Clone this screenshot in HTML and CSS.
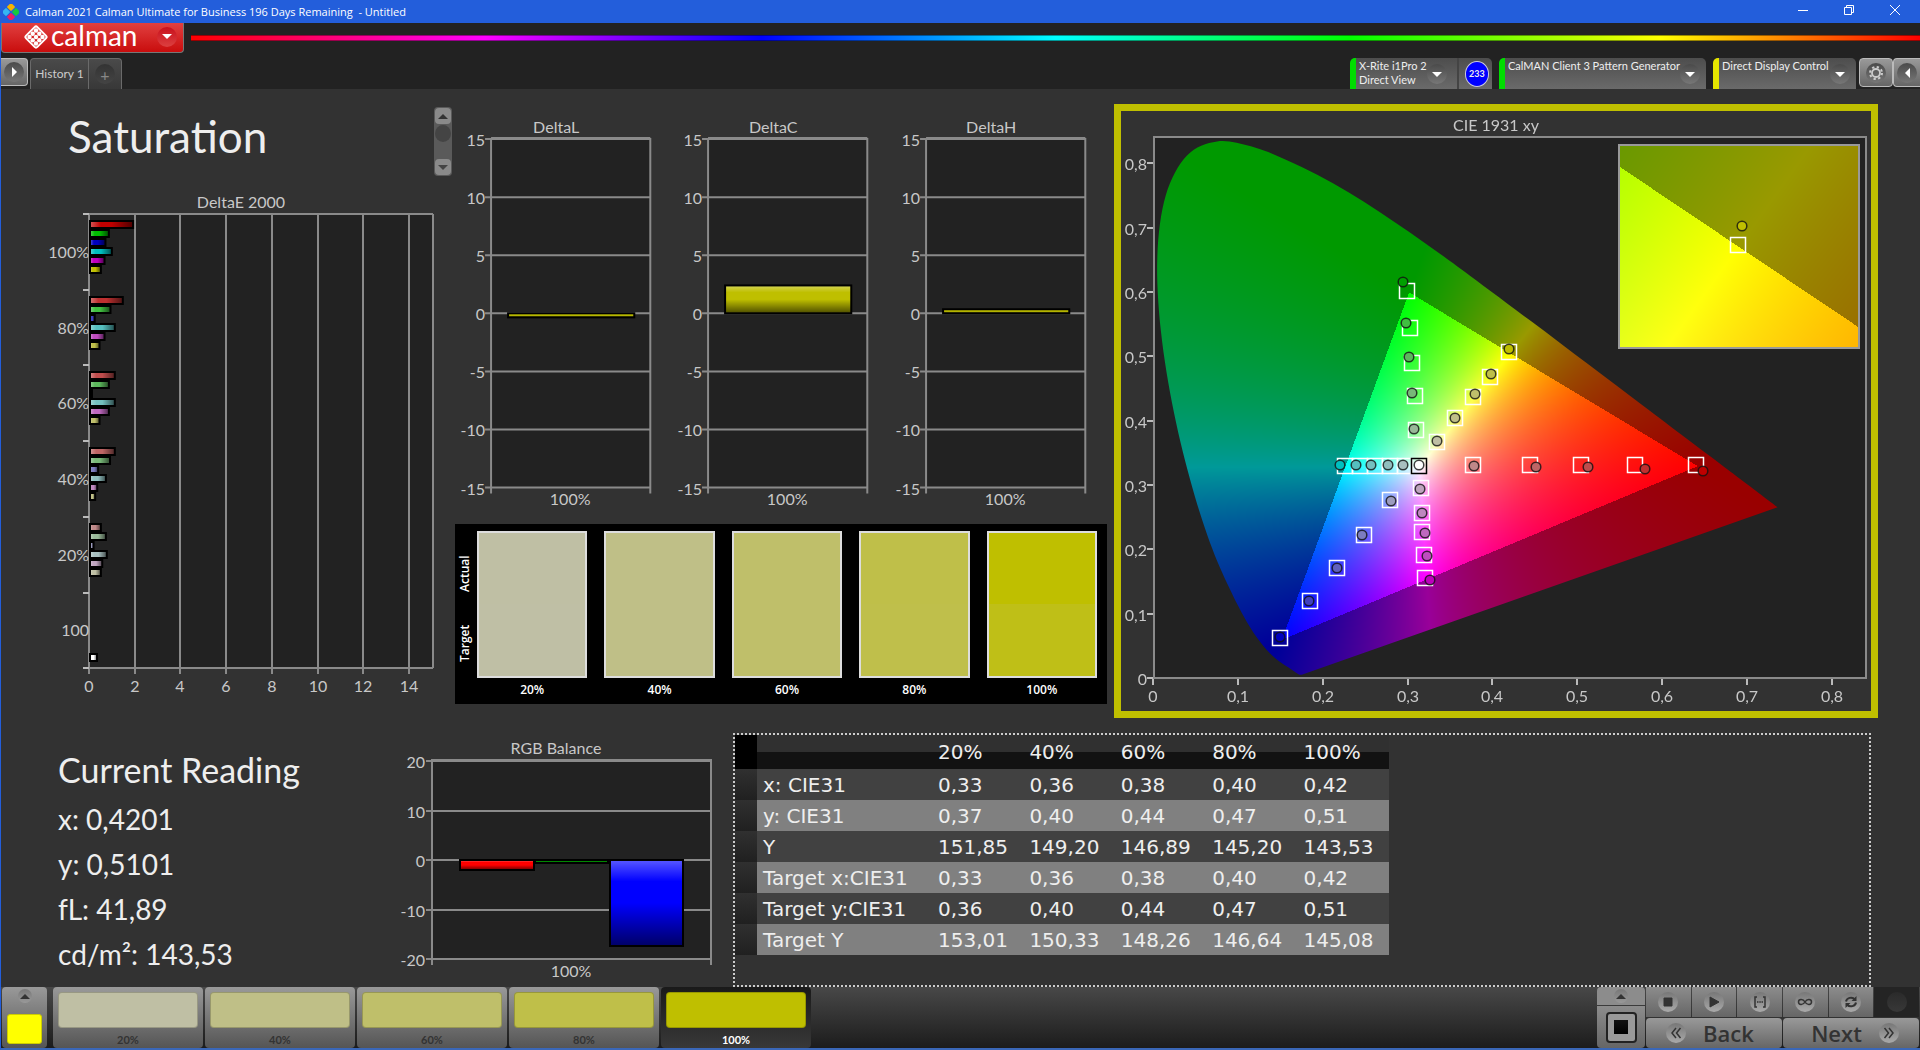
FILE: index.html
```html
<!DOCTYPE html>
<html lang="en">
<head>
  <meta charset="utf-8">
  <title>Calman 2021</title>
  <link rel="stylesheet" href="styles.css">
</head>
<body>
  <!-- Window title -->
  <div class="titlebar">
    <svg class="app-icon" viewBox="0 0 16 16">
      <rect x="5" y="0" width="6" height="6" rx="1" fill="#f5b400" transform="rotate(45 8 3)"/>
      <rect x="0" y="5" width="6" height="6" rx="1" fill="#35b6f2" transform="rotate(45 3 8)"/>
      <rect x="10" y="5" width="6" height="6" rx="1" fill="#17c83c" transform="rotate(45 13 8)"/>
      <rect x="5" y="10" width="6" height="6" rx="1" fill="#ee1c63" transform="rotate(45 8 13)"/>
    </svg>
    <span class="title-text">Calman 2021 Calman Ultimate for Business 196 Days Remaining &nbsp;- Untitled</span>
    <div class="window-buttons">
      <button aria-label="Minimize"><svg viewBox="0 0 12 12"><path d="M1 6.500h10"/></svg></button>
      <button aria-label="Restore"><svg viewBox="0 0 12 12"><path d="M1.500 3.500h7v7h-7zM3.500 3.500v-2h7v7h-2"/></svg></button>
      <button aria-label="Close"><svg viewBox="0 0 12 12"><path d="M1 1l10 10M11 1L1 11"/></svg></button>
    </div>
  </div>

  <!-- Brand menu and tabs -->
  <header class="header">
    <div class="brand-row">
      <button class="brand">
        <svg class="brand-icon" viewBox="0 0 24 24">
          <rect x="4" y="4" width="16" height="16" rx="2" transform="rotate(45 12 12)" fill="none" stroke="#fff" stroke-width="2"/>
          <g fill="#fff">
            <circle cx="12" cy="5.500" r="2.200"/><circle cx="8.700" cy="8.700" r="2.200"/><circle cx="15.300" cy="8.700" r="2.200"/>
            <circle cx="5.500" cy="12" r="2.200"/><circle cx="12" cy="12" r="2.200"/><circle cx="18.500" cy="12" r="2.200"/>
            <circle cx="8.700" cy="15.300" r="2.200"/><circle cx="15.300" cy="15.300" r="2.200"/><circle cx="12" cy="18.500" r="2.200"/>
          </g>
        </svg>
        <span class="brand-name">calman</span>
        <span class="knob knob-red"><i class="down"></i></span>
      </button>
      <div class="rainbow"></div>
    </div>
    <div class="tab-row">
      <button class="side-btn" aria-label="Expand"><span class="knob"><i class="right"></i></span></button>
      <div class="tabs">
        <button class="tab">History 1</button>
        <button class="tab-add" aria-label="Add tab"><span class="knob knob-dark">+</span></button>
      </div>
      <div class="devices">
        <div class="device device-meter">
          <button class="device-main"><span>X-Rite i1Pro 2<br>Direct View</span><span class="knob"><i class="down"></i></span></button>
          <span class="badge">233</span>
        </div>
        <div class="device device-pattern">
          <button class="device-main"><span>CalMAN Client 3 Pattern Generator</span><span class="knob"><i class="down"></i></span></button>
        </div>
        <div class="device device-display">
          <button class="device-main"><span>Direct Display Control</span><span class="knob"><i class="down"></i></span></button>
        </div>
      </div>
      <button class="side-btn gear-btn" aria-label="Settings">
        <span class="knob">
          <svg viewBox="0 0 16 16">
            <circle cx="8" cy="8" r="4" stroke-width="1.800"/>
            <circle cx="8" cy="8" r="6" stroke-width="2" stroke-dasharray="2.300 2.412"/>
          </svg>
        </span>
      </button>
      <button class="side-btn edge-btn" aria-label="Collapse"><span class="knob"><i class="left"></i></span></button>
    </div>
  </header>

  <main class="board">
    <div class="row row-top">
      <section class="col-left">
        <div class="heading-row">
          <h1>Saturation</h1>
          <div class="scroller">
            <button aria-label="Up"><i class="up"></i></button>
            <span class="thumb"></span>
            <button aria-label="Down"><i class="down"></i></button>
          </div>
        </div>
        <svg class="chart" id="deltaE" viewBox="40 190 412 520"></svg>
      </section>

      <section class="col-mid">
        <div class="delta-charts">
          <svg class="chart" id="deltaL" viewBox="0 0 217 420"></svg>
          <svg class="chart" id="deltaC" viewBox="0 0 217 420"></svg>
          <svg class="chart" id="deltaH" viewBox="0 0 217 420"></svg>
        </div>
        <div class="swatches">
          <div class="swatch-side"><span>Target</span><span>Actual</span></div>
          <div class="swatch-list">
            <div class="swatch s20"><div class="patch"></div>20%</div>
            <div class="swatch s40"><div class="patch"></div>40%</div>
            <div class="swatch s60"><div class="patch"></div>60%</div>
            <div class="swatch s80"><div class="patch"></div>80%</div>
            <div class="swatch s100"><div class="patch"></div>100%</div>
          </div>
        </div>
      </section>

      <section class="cie">
        <canvas id="cieFill" width="750" height="600"></canvas>
        <svg class="chart" id="cieChart" viewBox="1121 111 750 600"></svg>
      </section>
    </div>

    <div class="row row-bottom">
      <section class="reading">
        <h2>Current Reading</h2>
        <p>x: 0,4201</p>
        <p>y: 0,5101</p>
        <p>fL: 41,89</p>
        <p>cd/m²: 143,53</p>
      </section>
      <svg class="chart" id="rgbBalance" viewBox="387 733 346 254"></svg>
      <section class="table-panel">
        <table>
          <thead>
            <tr><td class="grip"></td><td></td><th>20%</th><th>40%</th><th>60%</th><th>80%</th><th>100%</th></tr>
          </thead>
          <tbody>
            <tr><td class="grip"></td><th>x: CIE31</th><td>0,33</td><td>0,36</td><td>0,38</td><td>0,40</td><td>0,42</td></tr>
            <tr><td class="grip"></td><th>y: CIE31</th><td>0,37</td><td>0,40</td><td>0,44</td><td>0,47</td><td>0,51</td></tr>
            <tr><td class="grip"></td><th>Y</th><td>151,85</td><td>149,20</td><td>146,89</td><td>145,20</td><td>143,53</td></tr>
            <tr><td class="grip"></td><th>Target x:CIE31</th><td>0,33</td><td>0,36</td><td>0,38</td><td>0,40</td><td>0,42</td></tr>
            <tr><td class="grip"></td><th>Target y:CIE31</th><td>0,36</td><td>0,40</td><td>0,44</td><td>0,47</td><td>0,51</td></tr>
            <tr><td class="grip"></td><th>Target Y</th><td>153,01</td><td>150,33</td><td>148,26</td><td>146,64</td><td>145,08</td></tr>
          </tbody>
        </table>
      </section>
    </div>
  </main>

  <!-- Pattern picker and transport -->
  <footer class="footer">
    <button class="picker" aria-label="Pattern"><span class="knob knob-small"><i class="up"></i></span><span class="picker-color"></span></button>
    <div class="tiles">
      <button class="tile s20"><span class="tile-color"></span>20%</button>
      <button class="tile s40"><span class="tile-color"></span>40%</button>
      <button class="tile s60"><span class="tile-color"></span>60%</button>
      <button class="tile s80"><span class="tile-color"></span>80%</button>
      <button class="tile s100 active"><span class="tile-color"></span>100%</button>
    </div>
    <div class="controls">
      <div class="mode">
        <button class="mode-up" aria-label="More"><span class="knob knob-small"><i class="up"></i></span></button>
        <button class="mode-pattern" aria-label="Window pattern"><span></span></button>
      </div>
      <div class="transport">
        <div class="transport-row">
          <button aria-label="Stop"><span class="knob knob-light"><svg viewBox="0 0 16 16"><path d="M4 4h8v8H4z" fill="#333"/></svg></span></button>
          <button aria-label="Play"><span class="knob knob-light"><svg viewBox="0 0 16 16"><path d="M4 3l9 5-9 5z" fill="#333"/></svg></span></button>
          <button aria-label="Read range"><span class="knob knob-light"><svg viewBox="0 0 16 16"><path d="M5 3H3v10h2M11 3h2v10h-2M5 8h1.500M7.300 8h1.500M9.500 8H11" stroke-width="1.500"/></svg></span></button>
          <button aria-label="Continuous"><span class="knob knob-light"><svg viewBox="0 0 16 16"><path d="M8 8C6 4.500 1.500 5 1.500 8s4.500 3.500 6.500 0 6.500-3 6.500 0-4.500 3.500-6.500 0z" stroke-width="1.500"/></svg></span></button>
          <button aria-label="Repeat"><span class="knob knob-light"><svg viewBox="0 0 16 16"><path d="M3 7.500C3.500 4 9 2 12 5.500M13 8.500C12.500 12 7 14 4 10.500" stroke-width="2"/><path d="M13.500 2v5h-5zM2.500 14V9h5z" fill="#333" stroke="none"/></svg></span></button>
          <span class="transport-end"><span class="knob knob-off"></span></span>
        </div>
        <div class="nav-row">
          <button class="back"><span class="knob knob-light"><svg viewBox="0 0 16 16"><path d="M8 3L4 8l4 5M12.500 3l-4 5 4 5" stroke-width="1.500"/></svg></span>Back</button>
          <button class="next">Next<span class="knob knob-light"><svg viewBox="0 0 16 16"><path d="M3.500 3l4 5-4 5M8 3l4 5-4 5" stroke-width="1.500"/></svg></span></button>
        </div>
      </div>
    </div>
  </footer>

  <script src="charts.js"></script>
</body>
</html>
```
FILE: styles.css
```css
/* Base styles */
* {
  box-sizing: border-box;
}

body {
  margin: 0;
  min-height: 100vh;
  display: flex;
  flex-direction: column;
  background: #323232;
  color: #eee;
  font-family: Lato, "Open Sans", sans-serif;
  border-left: 1px solid #235edb;
  border-bottom: 2px solid #3a67b8;
}

button {
  margin: 0;
  padding: 0;
  border: none;
  background: none;
  color: inherit;
  font-family: inherit;
}

/* Title bar */
.titlebar {
  height: 23px;
  display: flex;
  align-items: center;
  background: #235edb;
  font-family: "Open Sans", "Noto Sans", sans-serif;
  font-size: 11px;
  color: #fff;
}

.app-icon {
  width: 16px;
  height: 16px;
  margin: 0 6px 0 2px;
}

.window-buttons {
  margin-left: auto;
  padding-right: 2px;
  display: flex;
}

.window-buttons button {
  width: 46px;
  height: 23px;
  padding-bottom: 2px;
}

.window-buttons svg {
  width: 12px;
  height: 12px;
  fill: none;
  stroke: #fff;
}

/* Header */
.header {
  background: #222;
}

.brand-row {
  height: 35px;
  display: flex;
  align-items: flex-start;
  gap: 7px;
}

.brand {
  width: 183px;
  height: 30px;
  padding: 0 6px 2px 22px;
  display: flex;
  align-items: center;
  background: linear-gradient(#e14040, #c90d0d);
  border: 1px solid #777;
  border-top: none;
  border-radius: 0 0 4px 4px;
}

.brand-icon {
  width: 24px;
  height: 24px;
}

.brand-name {
  margin-left: 3px;
  padding-bottom: 4px;
  font-size: 28px;
  line-height: 24px;
  color: #fff;
}

.rainbow {
  flex: 1;
  height: 6px;
  margin-top: 12px;
  border: 1px solid rgba(0, 0, 0, 0.4);
  border-width: 1px 0;
  background: linear-gradient(to right, #f00, #f0f 17%, #00f 33%, #0ff 50%, #0f0 67%, #ff0 85%, #f00);
}

/* Round knobs with arrows */
.knob {
  width: 20px;
  height: 20px;
  flex-shrink: 0;
  display: flex;
  align-items: center;
  justify-content: center;
  border-radius: 50%;
  background: linear-gradient(#4a4a4a, #777);
}

.knob svg {
  width: 16px;
  height: 16px;
  fill: none;
  stroke: #333;
}

.gear-btn .knob svg {
  stroke: #ccc;
}

.knob-red {
  margin-left: auto;
  background: linear-gradient(#c8101c, #dc4040);
}

.knob-dark {
  background: linear-gradient(#333, #444);
  color: #888;
  font-size: 16px;
}

.knob-light {
  background: linear-gradient(#777, #aaa);
}

.knob-small {
  width: 14px;
  height: 14px;
  background: linear-gradient(#777, #999);
}

.knob-off {
  background: linear-gradient(#2a2a2a, #383838);
}

.down, .up, .left, .right {
  border: 5px solid transparent;
}

.down {
  border-top-color: #fff;
  border-bottom: none;
}

.up {
  border-bottom-color: #333;
  border-top: none;
}

.left {
  border-right-color: #fff;
  border-left: none;
}

.right {
  border-left-color: #fff;
  border-right: none;
}

/* Tabs and devices */
.tab-row {
  height: 31px;
  display: flex;
  align-items: flex-start;
}

.side-btn {
  width: 27px;
  height: 28px;
  display: flex;
  align-items: center;
  justify-content: center;
  background: linear-gradient(#999, #666);
  border: 1px solid #bbb;
  border-left: none;
  border-radius: 0 4px 4px 0;
}

.tabs {
  display: flex;
  height: 31px;
  margin-left: 2px;
  border: 1px solid #6a6a6a;
  border-bottom: none;
  border-radius: 4px 4px 0 0;
  background: linear-gradient(#4a4a4a, #383838);
}

.tab {
  width: 58px;
  padding-bottom: 2px;
  font-size: 12px;
  white-space: nowrap;
  color: #ccc;
  border-right: 1px solid #6a6a6a;
}

.tab-add {
  width: 32px;
  padding-left: 6px;
}

.devices {
  margin-left: auto;
  margin-right: 3px;
  display: flex;
  gap: 7px;
}

.device {
  height: 31px;
  display: flex;
  align-items: center;
  border-left: 6px solid #0d0;
  border-radius: 5px 5px 0 0;
  background: linear-gradient(#4d4d4d, #6a6a6a);
}

.device-meter {
  width: 142px;
}

.device-pattern {
  width: 207px;
}

.device-display {
  width: 143px;
  border-left-color: #e6e600;
}

.device-main {
  flex: 1;
  height: 31px;
  padding: 1px 6px 0 3px;
  display: flex;
  align-items: flex-start;
  justify-content: space-between;
  text-align: left;
  font-size: 11px;
  line-height: 14px;
  white-space: nowrap;
  color: #eee;
}

.device-main .knob {
  margin-top: 5px;
}

.device-meter .device-main {
  padding-right: 10px;
  border-right: 2px solid #444;
}

.badge {
  width: 26px;
  height: 26px;
  margin: 0 3px 0 6px;
  display: flex;
  align-items: center;
  justify-content: center;
  border: 1px solid #ccd;
  border-radius: 50%;
  background: #00f;
  font-size: 9px;
  font-weight: 700;
}

.gear-btn {
  width: 34px;
  height: 29px;
  border-left: 1px solid #bbb;
  border-radius: 4px;
}

.edge-btn {
  height: 29px;
  border-left: 1px solid #bbb;
  border-right: none;
  border-radius: 4px 0 0 4px;
}

/* Board */
.board {
  flex: 1;
  padding: 14px 42px 0 39px;
}

.row {
  display: grid;
}

.row-top {
  grid-template-columns: 412fr 652fr 768fr;
  column-gap: 3px;
}

.row-bottom {
  grid-template-columns: 347fr 346fr 1138fr;
  margin: 15px 7px 0 0;
}

.chart {
  display: block;
  width: 100%;
  font-size: 16px;
  fill: #c8c8c8;
}

.col-left {
  display: flex;
  flex-direction: column;
}

.heading-row {
  height: 87px;
  display: flex;
  justify-content: space-between;
}

h1 {
  margin: 3px 0 0 28px;
  font-size: 44px;
  line-height: 60px;
  font-weight: 400;
}

.scroller {
  width: 18px;
  height: 69px;
  margin-top: 4px;
  padding: 1px;
  display: flex;
  flex-direction: column;
  justify-content: space-between;
  background: #5a5a5a;
  border-radius: 4px;
}

.scroller button {
  width: 16px;
  height: 16px;
  display: flex;
  align-items: center;
  justify-content: center;
  background: #8a8a8a;
  border-radius: 4px;
}

.scroller .down {
  border-top-color: #444;
}

.thumb {
  width: 16px;
  height: 17px;
  margin-bottom: 16px;
  border-radius: 50%;
  background: #444;
}

/* Delta charts and swatches */
.delta-charts {
  display: grid;
  grid-template-columns: repeat(3, 1fr);
}

.swatches {
  display: flex;
  height: 180px;
  padding: 7px 10px 0 1px;
  background: #000;
  font-family: "Open Sans", sans-serif;
  font-size: 12px;
  font-weight: 600;
  color: #fff;
}

.swatch-side {
  width: 18px;
  height: 147px;
  margin-right: 3px;
  padding-bottom: 8px;
  display: flex;
  justify-content: space-around;
  writing-mode: vertical-rl;
  transform: rotate(180deg);
  line-height: 18px;
}

.swatch-list {
  flex: 1;
  display: grid;
  grid-template-columns: repeat(5, 1fr);
  column-gap: 17px;
}

.swatch {
  text-align: center;
  line-height: 23px;
}

.s20 { --actual: #bfbfa4; --target: #bfbfa5; }
.s40 { --actual: #bfbf87; --target: #bfbf87; }
.s60 { --actual: #bfbf6a; --target: #bfbf6a; }
.s80 { --actual: #bfbf49; --target: #bfbf4b; }
.s100 { --actual: #bfbf00; --target: #bfbf17; }

.patch {
  height: 147px;
  border: 2px solid #ddd;
  background: linear-gradient(var(--actual) 50%, var(--target) 50%);
}

/* CIE diagram: colour fill below, axes and markers above */
.cie {
  display: grid;
  align-self: start;
  margin: 1px 0 0 4px;
  border: 7px solid #bfbf00;
}

.cie > * {
  grid-area: 1 / 1;
}

.cie canvas {
  width: 100%;
}

/* Current reading */
.reading {
  padding: 13px 0 0 18px;
}

h2 {
  margin: 0 0 3px;
  font-size: 34px;
  line-height: 48px;
  font-weight: 400;
}

.reading p {
  margin: 0;
  font-size: 28px;
  line-height: 45px;
}

/* Results table */
.table-panel {
  border: 2px dotted #ccc;
  min-height: 254px;
}

table {
  width: 654px;
  table-layout: fixed;
  border-collapse: collapse;
  font-family: "DejaVu Sans", sans-serif;
  font-size: 20px;
  line-height: 30px;
}

th, td {
  padding: 0 0 0 6px;
  font-weight: 400;
  text-align: left;
  white-space: nowrap;
}

thead tr {
  height: 34px;
  background: linear-gradient(#303030 50%, #121212 50%);
}

tbody tr {
  height: 31px;
  background: #414141;
}

tbody tr:nth-child(even) {
  background: #808080;
}

.grip {
  width: 22px;
  background: linear-gradient(#303030, #202020);
}

thead .grip {
  background: #000;
}

thead td:nth-child(2) {
  width: 175px;
}

/* Footer */
.footer {
  height: 61px;
  display: flex;
  background: linear-gradient(#484848, #1c1c1c);
}

.picker {
  width: 45px;
  margin: 0 6px 0 1px;
  padding: 2px 0 4px;
  display: flex;
  flex-direction: column;
  align-items: center;
  justify-content: space-between;
  background: linear-gradient(#999, #555);
  border-radius: 4px;
}

.picker-color {
  width: 35px;
  height: 30px;
  background: #ff0;
  border: 1px solid #cc0;
  border-radius: 3px;
}

.tiles {
  display: flex;
  gap: 2px;
}

.tile {
  width: 150px;
  padding: 5px 5px 0;
  display: flex;
  flex-direction: column;
  align-items: stretch;
  justify-content: flex-start;
  background: linear-gradient(#999, #555);
  border-radius: 4px;
  font-size: 11px;
  line-height: 24px;
  font-weight: 700;
  color: #333;
}

.tile-color {
  height: 36px;
  flex-shrink: 0;
  background: var(--actual);
  border: 1px solid rgba(0, 0, 0, 0.2);
  border-radius: 4px;
}

.tile.active {
  background: linear-gradient(#1a1a1a, #383838);
  color: #fff;
}

.controls {
  margin-left: auto;
  margin-right: 1px;
  display: flex;
  gap: 1px;
}

.mode {
  width: 48px;
  display: flex;
  flex-direction: column;
  gap: 1px;
}

.mode button {
  display: flex;
  align-items: center;
  justify-content: center;
  background: #8c8c8c;
  border-radius: 4px 4px 0 0;
}

.mode .mode-up {
  height: 18px;
}

.mode .mode-pattern {
  height: 42px;
  background: linear-gradient(#8c8c8c, #666);
  border-radius: 0 0 4px 4px;
}

.mode-pattern span {
  width: 31px;
  height: 31px;
  border: 2px solid #222;
  border-radius: 4px;
  background: linear-gradient(#111, #000) center / 14px 14px no-repeat, #999;
}

.transport {
  width: 273px;
  display: flex;
  flex-direction: column;
  gap: 1px;
}

.transport-row, .nav-row {
  height: 30px;
  display: flex;
  gap: 1px;
}

.transport-row > * {
  flex: 1;
  display: flex;
  align-items: center;
  justify-content: center;
  background: linear-gradient(#8c8c8c, #666);
}

.transport-row .transport-end {
  background: #242424;
}

.nav-row button {
  flex: 1;
  display: flex;
  align-items: center;
  justify-content: center;
  gap: 17px;
  background: linear-gradient(#999, #666);
  border-radius: 4px;
  font-family: "Open Sans", sans-serif;
  font-size: 22px;
  line-height: 28px;
  font-weight: 600;
  color: #333;
}

.nav-row .back {
  padding-right: 8px;
}

.nav-row .next {
  padding-left: 8px;
}
```
FILE: charts.js
```js
const SVG_NS = 'http://www.w3.org/2000/svg';

function add(parent, name, attrs, text) {
  const el = document.createElementNS(SVG_NS, name);
  for (const key in attrs) el.setAttribute(key, attrs[key]);
  if (text !== undefined) el.textContent = text;
  parent.appendChild(el);
  return el;
}

function line(svg, x1, y1, x2, y2, color = '#8a8a8a', width = 2) {
  add(svg, 'line', { x1, y1, x2, y2, stroke: color, 'stroke-width': width });
}

function label(svg, x, y, text, anchor = 'middle') {
  add(svg, 'text', { x, y, 'text-anchor': anchor }, text);
}

// stops: [offset, color, opacity] painted over the bar color
function shade(svg, id, vertical) {
  const grad = add(svg, 'linearGradient', { id, x2: vertical ? 0 : 1, y2: vertical ? 1 : 0 });
  [[0, '#fff', 0.35], [0.25, '#fff', 0], [0.5, '#000', 0], [1, '#000', 0.6]].forEach(([offset, color, opacity]) => {
    add(grad, 'stop', { offset, 'stop-color': color, 'stop-opacity': opacity });
  });
}

function bar(svg, x, y, width, height, fill, gradId) {
  add(svg, 'rect', { x, y, width, height, fill });
  add(svg, 'rect', { x, y, width, height, fill: `url(#${gradId})`, stroke: '#000', 'stroke-width': 2 });
}

// DeltaE 2000, horizontal bars
function drawDeltaE() {
  const svg = document.getElementById('deltaE');
  const left = 89, right = 433, top = 214, bottom = 668, unit = 22.85, step = 75.7;
  shade(svg, 'shadeE', false);
  label(svg, 241, 208, 'DeltaE 2000');
  add(svg, 'rect', { x: left, y: top, width: right - left, height: bottom - top, fill: '#222' });
  for (let v = 0; v <= 14; v += 2) {
    const x = Math.round(left + v * unit);
    line(svg, x, top, x, bottom + 6);
    label(svg, x, 692, v);
  }
  ['100%', '80%', '60%', '40%', '20%', '100'].forEach((name, i) => {
    label(svg, 89, Math.round(top + (i + 0.5) * step + 6), name, 'end');
  });
  for (let i = 0; i <= 6; i++) {
    const y = Math.round(top + i * step);
    line(svg, left - 6, y, left, y, '#bbb');
  }
  line(svg, left, top, right, top);
  line(svg, right, top, right, bottom);
  line(svg, left, bottom, right, bottom);

  const groups = [
    [['#bf0000', 1.93], ['#00bf00', 0.87], ['#0000bf', 0.72], ['#00bfbf', 1.0], ['#bf00bf', 0.68], ['#bfbf00', 0.52]],
    [['#bf3030', 1.48], ['#40bf40', 0.94], ['#4040bf', 0.25], ['#55bfbf', 1.13], ['#bf4cbf', 0.68], ['#bfbf49', 0.46]],
    [['#bf4c4c', 1.13], ['#5cb85c', 0.87], ['#6060bf', 0.13], ['#74bfbf', 1.13], ['#bf68bf', 0.87], ['#bfbf6a', 0.46]],
    [['#bf6565', 1.13], ['#78b878', 0.92], ['#7c7cbf', 0.4], ['#90bfbf', 0.74], ['#bf88bf', 0.36], ['#bfbf87', 0.27]],
    [['#bf8888', 0.52], ['#98b898', 0.74], ['#9c9cbf', 0.2], ['#a8bfbf', 0.78], ['#bfa4bf', 0.58], ['#bfbfa4', 0.52]]
  ];
  groups.forEach((bars, g) => {
    bars.forEach(([color, value], i) => {
      bar(svg, left + 1, Math.round(top + g * step) + 7 + i * 9, value * unit - 1, 7, color, 'shadeE');
    });
  });
  bar(svg, left + 1, 654, 7, 7, '#fff', 'shadeE');
}

// DeltaL / DeltaC / DeltaH
function drawDelta(id, value) {
  const svg = document.getElementById(id);
  const left = 36, right = 195, zero = 210, unit = 11.6;
  shade(svg, 'shade' + id, true);
  label(svg, 101, 30, id.replace('delta', 'Delta'));
  add(svg, 'rect', { x: left, y: 35, width: right - left, height: 349, fill: '#222' });
  line(svg, left, 35, right, 35);
  for (let v = 15; v >= -15; v -= 5) {
    const y = Math.round(zero - v * unit);
    line(svg, left - 6, y, right, y);
    label(svg, 30, y + 7, v, 'end');
  }
  line(svg, left, 35, left, 390);
  line(svg, right, 35, right, 390);
  label(svg, 115, 401, '100%');
  const h = Math.abs(value) * unit;
  bar(svg, 53, value > 0 ? zero - h : zero, 126, h, '#bfbf00', 'shade' + id);
}

function drawBalance() {
  const svg = document.getElementById('rgbBalance');
  shade(svg, 'shadeRgb', true);
  label(svg, 556, 754, 'RGB Balance');
  add(svg, 'rect', { x: 432, y: 760, width: 279, height: 199, fill: '#222' });
  line(svg, 432, 760, 711, 760);
  for (let v = 20; v >= -20; v -= 10) {
    const y = Math.round(860 - v * 4.95);
    line(svg, 426, y, 711, y);
    label(svg, 425, y + 7, v, 'end');
  }
  line(svg, 432, 759, 432, 965);
  line(svg, 711, 759, 711, 965);
  label(svg, 571, 977, '100%');
  bar(svg, 460, 860, 74, 10, '#f00', 'shadeRgb');
  bar(svg, 535, 860, 73, 3, '#080', 'shadeRgb');
  bar(svg, 610, 860, 73, 86, '#00f', 'shadeRgb');
}

// Spectral locus, CIE 1931 2 degree observer
const LOCUS = [
  [0.1741, 0.005], [0.1714, 0.0051], [0.1689, 0.0069], [0.1644, 0.0109], [0.1566, 0.0177], [0.144, 0.0297],
  [0.1355, 0.0399], [0.1241, 0.0578], [0.1096, 0.0868], [0.0913, 0.1327], [0.0687, 0.2007], [0.0454, 0.295],
  [0.0235, 0.4127], [0.0082, 0.5384], [0.0039, 0.6548], [0.0139, 0.7502], [0.0389, 0.812], [0.0743, 0.8338],
  [0.1142, 0.8262], [0.1547, 0.8059], [0.1929, 0.7816], [0.2296, 0.7543], [0.2658, 0.7243], [0.3016, 0.6923],
  [0.3373, 0.6589], [0.3731, 0.6245], [0.4441, 0.5547], [0.5125, 0.4866], [0.5752, 0.4242], [0.627, 0.3725],
  [0.6658, 0.334], [0.6915, 0.3083], [0.719, 0.2809], [0.7347, 0.2653]
];

// Brightest color with chromaticity x,y; dimmed when it is out of gamut
function chromaColor(x, y) {
  const X = x / y, Z = (1 - x - y) / y;
  const rgb = [
    3.2406 * X - 1.5372 - 0.4986 * Z,
    -0.9689 * X + 1.8758 + 0.0415 * Z,
    0.0557 * X - 0.204 + 1.057 * Z
  ];
  const level = Math.min(...rgb) < 0 ? 153 : 255;
  const max = Math.max(...rgb);
  return rgb.map(c => Math.max(0, c) / max * level);
}

function paint(width, height, toXY) {
  const canvas = document.createElement('canvas');
  canvas.width = width;
  canvas.height = height;
  const ctx = canvas.getContext('2d');
  const image = ctx.createImageData(width, height);
  for (let j = 0; j < height; j++) {
    for (let i = 0; i < width; i++) {
      const [x, y] = toXY(i, j);
      const [r, g, b] = chromaColor(x, Math.max(y, 0.001));
      image.data.set([r, g, b, 255], (j * width + i) * 4);
    }
  }
  ctx.putImageData(image, 0, 0);
  return canvas;
}

// Catmull-Rom curve through all the points
function tracePath(ctx, pts) {
  ctx.beginPath();
  ctx.moveTo(...pts[0]);
  for (let i = 0; i < pts.length - 1; i++) {
    const p0 = pts[i - 1] || pts[i], p1 = pts[i], p2 = pts[i + 1], p3 = pts[i + 2] || p2;
    ctx.bezierCurveTo(
      p1[0] + (p2[0] - p0[0]) / 6, p1[1] + (p2[1] - p0[1]) / 6,
      p2[0] - (p3[0] - p1[0]) / 6, p2[1] - (p3[1] - p1[1]) / 6,
      p2[0], p2[1]
    );
  }
  ctx.closePath();
}

function drawCie() {
  // plot origin and scale inside the 750x600 canvas
  const ox = 33, oy = 567, sx = 848.7, sy = 643.5;
  const ctx = document.getElementById('cieFill').getContext('2d');
  ctx.fillStyle = '#222';
  ctx.fillRect(33, 26, 713, 541);

  ctx.save();
  tracePath(ctx, LOCUS.map(([x, y]) => [ox + x * sx, oy - y * sy]));
  ctx.clip();
  ctx.drawImage(paint(750, 600, (i, j) => [(i - ox) / sx, (oy - j) / sy]), 0, 0);
  ctx.restore();

  // zoomed inset around the selected target
  ctx.drawImage(paint(240, 203, (i, j) => [0.4193 + (i - 119) / 4800, 0.5053 - (j - 101) / 4060]), 498, 34);

  const svg = document.getElementById('cieChart');
  label(svg, 1496, 131, 'CIE 1931 xy');
  for (let i = 0; i <= 8; i++) {
    const text = i === 0 ? '0' : '0,' + i;
    const x = Math.round(1153 + i * 84.87), y = Math.round(678 - i * 64.35);
    line(svg, x, 678, x, 685, '#bbb');
    line(svg, 1147, y, 1154, y, '#bbb');
    label(svg, x, 702, text);
    label(svg, 1147, y + 7, text, 'end');
  }
  add(svg, 'rect', { x: 1154, y: 137, width: 712, height: 541, fill: 'none', stroke: '#8a8a8a', 'stroke-width': 2 });
  add(svg, 'rect', { x: 1619, y: 145, width: 240, height: 203, fill: 'none', stroke: '#999', 'stroke-width': 2 });

  // [target x, target y, actual x, actual y, color]
  const points = [
    [1473, 465, 1474, 466, '#bf8888'], [1530, 465, 1536, 467, '#bf6565'], [1581, 465, 1588, 467, '#bf4c4c'],
    [1635, 465, 1645, 469, '#bf3030'], [1696, 465, 1703, 471, '#bf0000'],
    [1416, 430, 1414, 429, '#98b898'], [1415, 396, 1412, 393, '#78b878'], [1412, 363, 1409, 357, '#5cb85c'],
    [1410, 328, 1406, 323, '#40bf40'], [1407, 291, 1403, 282, '#00a000'],
    [1390, 500, 1391, 501, '#9c9cbf'], [1364, 535, 1362, 535, '#7c7cbf'], [1337, 568, 1337, 568, '#6060bf'],
    [1310, 601, 1309, 601, '#4040bf'], [1280, 638, 1280, 637, '#0000bf'],
    [1405, 466, 1403, 465, '#a8bfbf'], [1390, 466, 1388, 465, '#90bfbf'], [1375, 466, 1371, 465, '#74bfbf'],
    [1360, 466, 1356, 465, '#55bfbf'], [1345, 466, 1340, 465, '#00bfbf'],
    [1421, 488, 1420, 489, '#bfa4bf'], [1422, 513, 1422, 513, '#bf88bf'], [1422, 532, 1425, 533, '#bf68bf'],
    [1424, 555, 1427, 556, '#bf4cbf'], [1425, 578, 1430, 580, '#bf00bf'],
    [1437, 442, 1437, 441, '#bfbfa4'], [1455, 418, 1455, 418, '#bfbf87'], [1473, 397, 1475, 394, '#bfbf6a'],
    [1490, 377, 1491, 374, '#bfbf49'], [1509, 352, 1509, 349, '#bfbf00'],
    [1738, 245, 1742, 226, '#bfbf00']
  ];
  points.forEach(([x, y]) => marker(svg, x, y, '#fff'));
  marker(svg, 1419, 466, '#000');
  points.forEach(([, , x, y, fill]) => reading(svg, x, y, fill));
  reading(svg, 1419, 465, '#fff');
}

function marker(svg, x, y, stroke) {
  add(svg, 'rect', { x: x - 7.5, y: y - 7.5, width: 15, height: 15, fill: 'none', stroke, 'stroke-width': 1.5 });
}

function reading(svg, cx, cy, fill) {
  add(svg, 'circle', { cx, cy, r: 4.8, fill, stroke: '#111', 'stroke-opacity': 0.8, 'stroke-width': 1.5 });
}

drawDeltaE();
drawDelta('deltaL', -0.35);
drawDelta('deltaC', 2.4);
drawDelta('deltaH', 0.35);
drawBalance();
drawCie();
```
